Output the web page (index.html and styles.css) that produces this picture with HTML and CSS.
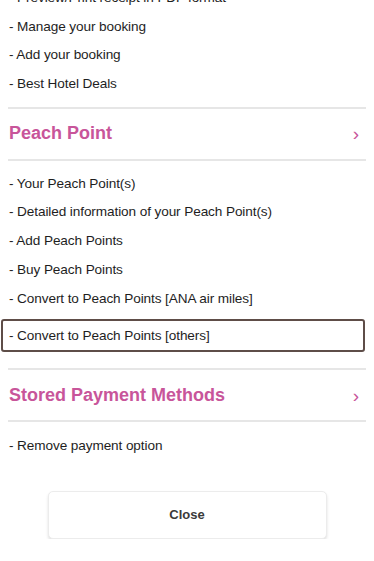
FILE: index.html
```html
<!DOCTYPE html>
<html lang="en">
<head>
  <meta charset="UTF-8">
  <meta name="viewport" content="width=device-width, initial-scale=1.0">
  <title>My Page Menu</title>
  <link rel="stylesheet" href="styles.css">
</head>
<body>

<div id="menu">
  <ul class="links first">
    <li><a href="#">- Preview/Print receipt in PDF format</a></li>
    <li><a href="#">- Manage your booking</a></li>
    <li><a href="#">- Add your booking</a></li>
    <li><a href="#">- Best Hotel Deals</a></li>
  </ul>

  <div class="section-head">
    <span>Peach Point</span>
    <span class="chevron">&rsaquo;</span>
  </div>
  <ul class="links">
    <li><a href="#">- Your Peach Point(s)</a></li>
    <li><a href="#">- Detailed information of your Peach Point(s)</a></li>
    <li><a href="#">- Add Peach Points</a></li>
    <li><a href="#">- Buy Peach Points</a></li>
    <li><a href="#">- Convert to Peach Points [ANA air miles]</a></li>
    <li class="focused"><a href="#">- Convert to Peach Points [others]</a></li>
  </ul>

  <div class="section-head">
    <span>Stored Payment Methods</span>
    <span class="chevron">&rsaquo;</span>
  </div>
  <ul class="links last">
    <li><a href="#">- Remove payment option</a></li>
  </ul>

  <div class="close-wrap">
    <button id="close-button">Close</button>
  </div>
</div>

</body>
</html>
```

FILE: styles.css
```css
body {
  font-family: 'Liberation Sans', Arial, sans-serif;
  margin: 0;
  padding: 0;
  background: #fff;
  color: #222;
}

#menu {
  margin-top: -16px;
}

.links {
  list-style: none;
  margin: 0;
  padding: 9px 0;
}

.links.first {
  padding-top: 0;
  padding-bottom: 8px;
}

.links li a {
  display: block;
  height: 28.7px;
  line-height: 28.7px;
  padding-left: 9px;
  font-size: 13.6px;
  letter-spacing: -0.1px;
  color: #1e1e1e;
  text-decoration: none;
}

.links li.focused {
  margin: 6px 9px 7px 1px;
  border: 2px solid #5e4d48;
  border-radius: 3px;
}

.links li.focused a {
  height: 29px;
  line-height: 29px;
  padding-left: 6px;
}

.links.last {
  padding-top: 10px;
  padding-bottom: 0;
}

.section-head {
  display: flex;
  align-items: center;
  justify-content: space-between;
  margin: 0 8px;
  height: 50px;
  border-top: 2px solid #e6e6e6;
  border-bottom: 2px solid #e6e6e6;
  padding: 0 7px 0 1px;
  font-size: 18px;
  font-weight: bold;
  color: #c8559a;
}

.section-head .chevron {
  font-size: 19px;
  font-weight: normal;
  line-height: 1;
}

.close-wrap {
  display: flex;
  justify-content: center;
  margin-top: 30px;
}

#close-button {
  width: 279px;
  height: 48px;
  background: #fff;
  border: 1px solid #ececec;
  border-radius: 5px;
  box-shadow: 0 2px 3px rgba(0, 0, 0, 0.12);
  font-family: 'Liberation Sans', Arial, sans-serif;
  font-size: 13px;
  font-weight: bold;
  color: #3a3a3a;
}
```
